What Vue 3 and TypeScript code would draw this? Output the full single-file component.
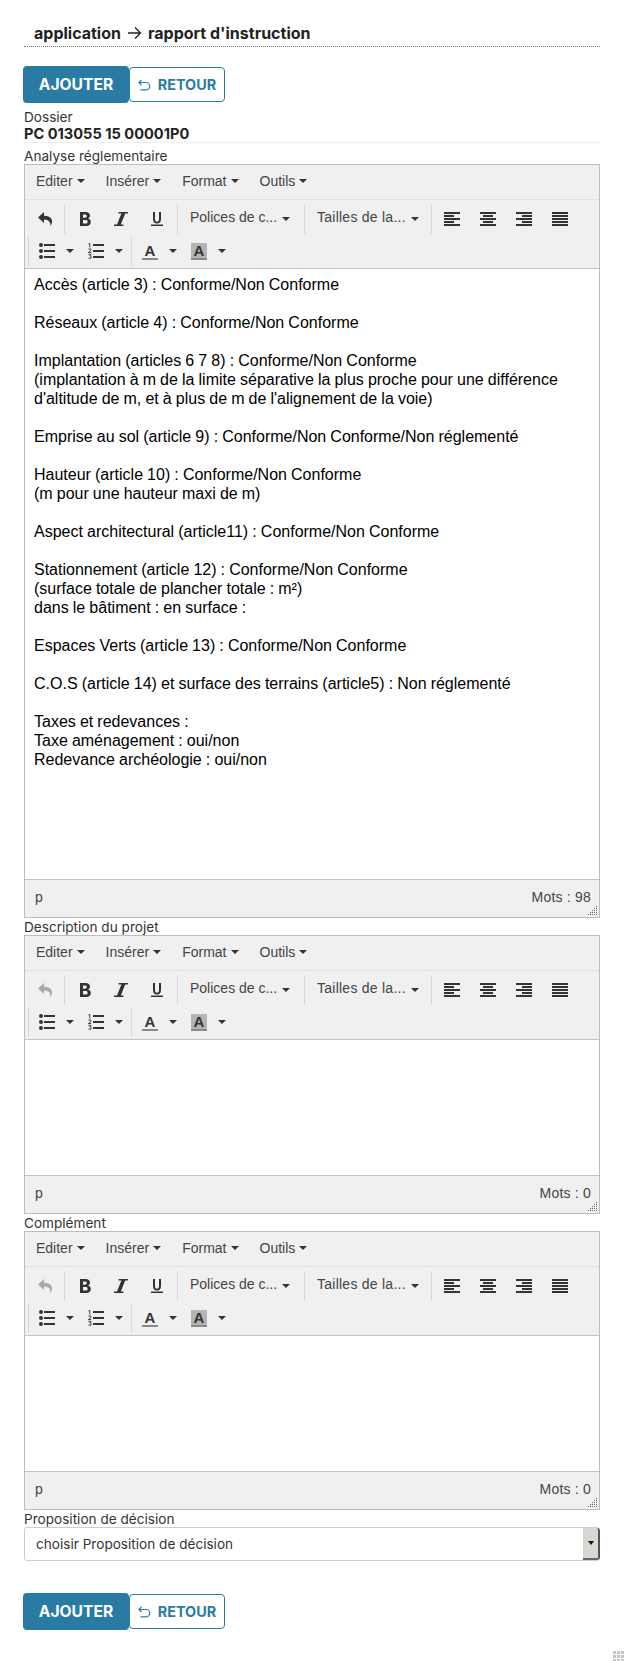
<script setup lang="ts">
const analyse: string[] = [
  'Accès (article 3) : Conforme/Non Conforme',
  '',
  'Réseaux (article 4) : Conforme/Non Conforme',
  '',
  'Implantation (articles 6 7 8) : Conforme/Non Conforme',
  '(implantation à m de la limite séparative la plus proche pour une différence',
  "d'altitude de m, et à plus de m de l'alignement de la voie)",
  '',
  'Emprise au sol (article 9) : Conforme/Non Conforme/Non réglementé',
  '',
  'Hauteur (article 10) : Conforme/Non Conforme',
  '(m pour une hauteur maxi de m)',
  '',
  'Aspect architectural (article11) : Conforme/Non Conforme',
  '',
  'Stationnement (article 12) : Conforme/Non Conforme',
  '(surface totale de plancher totale : m²)',
  'dans le bâtiment : en surface :',
  '',
  'Espaces Verts (article 13) : Conforme/Non Conforme',
  '',
  'C.O.S (article 14) et surface des terrains (article5) : Non réglementé',
  '',
  'Taxes et redevances :',
  'Taxe aménagement : oui/non',
  'Redevance archéologie : oui/non',
]

interface Editor {
  label: string
  lines: string[]
  words: number
  tall: boolean
  undo: boolean
}

const editors: Editor[] = [
  { label: 'Analyse réglementaire', lines: analyse, words: 98, tall: true, undo: true },
  { label: 'Description du projet', lines: [], words: 0, tall: false, undo: false },
  { label: 'Complément', lines: [], words: 0, tall: false, undo: false },
]

const menus: string[] = ['Editer', 'Insérer', 'Format', 'Outils']

const aligns: { name: string; widths: number[] }[] = [
  { name: 'left', widths: [16, 10, 16, 10, 16] },
  { name: 'center', widths: [16, 10, 16, 10, 16] },
  { name: 'right', widths: [16, 10, 16, 10, 16] },
  { name: 'justify', widths: [16, 16, 16, 16, 16] },
]
</script>

<template>
  <div class="page">
    <h1 class="title">
      <span>application</span>
      <svg class="arrow" width="15" height="14" viewBox="0 0 15 14">
        <path d="M1 7h12.5M8 1.5 13.5 7 8 12.5" fill="none" stroke="#222" stroke-width="1.3" />
      </svg>
      <span>rapport d'instruction</span>
    </h1>

    <div class="actions top">
      <button class="btn primary" type="button">AJOUTER</button>
      <button class="btn back" type="button">
        <svg width="13" height="12" viewBox="0 0 13 12">
          <path d="M3.5 1 1 3.500 3.500 6M1.200 3.500h6.800a3.700 3.700 0 0 1 0 7.400H2.500" fill="none" stroke="#2a7ba3" stroke-width="1.200" />
        </svg>
        RETOUR
      </button>
    </div>

    <div class="field-label">Dossier</div>
    <div class="value">PC 013055 15 00001P0</div>

    <section v-for="ed in editors" :key="ed.label" class="editor-field">
      <label class="field-label">{{ ed.label }}</label>
      <div class="editor">
        <div class="menubar">
          <span v-for="m in menus" :key="m" class="menu">{{ m }}<i class="caret"></i></span>
        </div>
        <div class="toolbar">
          <div class="row">
            <div class="group first">
              <span class="tbtn">
                <svg width="16" height="16" viewBox="0 0 16 16">
                  <path
                    :fill="ed.undo ? '#333' : '#aaa'"
                    d="M7 1 1 6.500 7 12V8.400c3 0 5 .9 6 3.400.4 1 .6 2.100.3 3.200 1.600-2 2.200-4.200 1.500-6.300C13.900 6 11 4.800 7 4.700z"
                  />
                </svg>
              </span>
            </div>
            <div class="group">
              <span class="tbtn">
                <svg width="12" height="14" viewBox="0 0 12 14">
                  <path fill="#333" fill-rule="evenodd" d="M1 0h5.600C9.300 0 11 1.300 11 3.500c0 1.500-.8 2.500-2 3 1.700.4 2.800 1.700 2.800 3.500 0 2.500-1.900 4-4.500 4H1zm3 2.400v3.300h2c1.100 0 1.800-.6 1.800-1.700 0-1-.7-1.600-1.800-1.600zm0 5.500v3.700h2.600c1.300 0 2.100-.7 2.100-1.900S7.900 7.900 6.600 7.900z" />
                </svg>
              </span>
              <span class="tbtn">
                <svg width="14" height="14" viewBox="0 0 14 14">
                  <path fill="#333" d="M4.500 0H14v1.600h-2.800L6.800 12.400h2.600V14H0v-1.600h3L7.400 1.600H4.500z" />
                </svg>
              </span>
              <span class="tbtn">
                <svg width="12" height="14" viewBox="0 0 12 14">
                  <path fill="#333" d="M2 0h2v7c0 1.700.7 2.700 2 2.700S8 8.700 8 7V0h2v7c0 3-1.500 4.600-4 4.600S2 10 2 7zM0 12.500h12V14H0z" />
                </svg>
              </span>
            </div>
            <div class="group">
              <span class="listbox"><span class="lb-text">Polices de c...</span><i class="caret"></i></span>
            </div>
            <div class="group">
              <span class="listbox"><span class="lb-text spaced">Tailles de la...</span><i class="caret"></i></span>
            </div>
            <div class="group">
              <span v-for="a in aligns" :key="a.name" class="tbtn">
                <span class="align" :class="a.name">
                  <b v-for="(w, j) in a.widths" :key="j" :style="{ width: w + 'px' }"></b>
                </span>
              </span>
            </div>
          </div>
          <div class="row second">
            <div class="group">
              <span class="split">
                <svg class="ic" width="16" height="16" viewBox="0 0 16 16">
                  <g fill="#333">
                    <circle cx="2" cy="2" r="2" /><circle cx="2" cy="8" r="2" /><circle cx="2" cy="14" r="2" />
                    <rect x="5" y="1" width="11" height="2" /><rect x="5" y="7" width="11" height="2" /><rect x="5" y="13" width="11" height="2" />
                  </g>
                </svg>
                <i class="caret"></i>
              </span>
              <span class="split">
                <svg class="ic" width="16" height="16" viewBox="0 0 16 16">
                  <g fill="#333">
                    <rect x="5" y="1" width="11" height="2" /><rect x="5" y="7" width="11" height="2" /><rect x="5" y="13" width="11" height="2" />
                  </g>
                  <path
                    d="M.5 1 1.800.3V4.500M.4 6h2.600v1.200L.4 9.500H3.200M.4 11.300H3l-1.200 1.500H3v2.400H.4"
                    fill="none"
                    stroke="#333"
                    stroke-width=".9"
                  />
                </svg>
                <i class="caret"></i>
              </span>
            </div>
            <div class="group">
              <span class="split">
                <span class="ic color">A</span>
                <i class="caret"></i>
              </span>
              <span class="split">
                <span class="ic color bg">A</span>
                <i class="caret"></i>
              </span>
            </div>
          </div>
        </div>
        <div class="content" :class="{ tall: ed.tall }">
          <div v-for="(line, i) in ed.lines" :key="i" class="line">{{ line }}</div>
        </div>
        <div class="status">
          <span>p</span>
          <span class="words">Mots : {{ ed.words }}</span>
          <svg class="resize" width="10" height="10" viewBox="0 0 10 10">
            <g fill="#666">
              <rect x="8" y="0" width="1" height="1" />
              <rect x="6" y="2" width="1" height="1" /><rect x="8" y="2" width="1" height="1" />
              <rect x="4" y="4" width="1" height="1" /><rect x="6" y="4" width="1" height="1" /><rect x="8" y="4" width="1" height="1" />
              <rect x="2" y="6" width="1" height="1" /><rect x="4" y="6" width="1" height="1" /><rect x="6" y="6" width="1" height="1" /><rect x="8" y="6" width="1" height="1" />
              <rect x="0" y="8" width="1" height="1" /><rect x="2" y="8" width="1" height="1" /><rect x="4" y="8" width="1" height="1" /><rect x="6" y="8" width="1" height="1" /><rect x="8" y="8" width="1" height="1" />
            </g>
          </svg>
        </div>
      </div>
    </section>

    <label class="field-label select-label">Proposition de décision</label>
    <div class="select-wrap">
      <select class="select">
        <option>choisir Proposition de décision</option>
      </select>
      <span class="select-btn"><i></i></span>
    </div>

    <div class="actions bottom">
      <button class="btn primary" type="button">AJOUTER</button>
      <button class="btn back" type="button">
        <svg width="13" height="12" viewBox="0 0 13 12">
          <path d="M3.500 1 1 3.500 3.500 6M1.200 3.500h6.800a3.700 3.700 0 0 1 0 7.400H2.500" fill="none" stroke="#2a7ba3" stroke-width="1.200" />
        </svg>
        RETOUR
      </button>
    </div>

    <svg class="grip" width="11" height="10" viewBox="0 0 11 10">
      <g fill="#c4c4c4">
        <rect x="0" y="0" width="3" height="3" /><rect x="4" y="0" width="3" height="3" /><rect x="8" y="0" width="3" height="3" />
        <rect x="0" y="4" width="3" height="3" /><rect x="4" y="4" width="3" height="3" /><rect x="8" y="4" width="3" height="3" />
        <rect x="0" y="8" width="3" height="2" /><rect x="4" y="8" width="3" height="2" /><rect x="8" y="8" width="3" height="2" />
      </g>
    </svg>
  </div>
</template>

<style scoped>
.page {
  position: relative;
  box-sizing: border-box;
  width: 624px;
  height: 1661px;
  padding: 0 24px;
  overflow: hidden;
  background: #fff;
  color: #333;
  font-family: Inter, "Liberation Sans", sans-serif;
  font-size: 13.6px;
}
.title {
  display: flex;
  align-items: center;
  gap: 6px;
  box-sizing: border-box;
  height: 47px;
  margin: 0;
  padding: 23px 0 3px 10px;
  border-bottom: 1px dotted #777;
  font-size: 16px;
  line-height: 20px;
  font-weight: 650;
  color: #222;
}
.actions {
  display: flex;
  align-items: center;
  margin-left: -1px;
}
.actions.top { margin-top: 19px; }
.actions.bottom { margin-top: 32px; }
.btn {
  box-sizing: border-box;
  font-family: Inter, "Liberation Sans", sans-serif;
  font-weight: 700;
  cursor: pointer;
}
.primary {
  width: 106px;
  height: 37px;
  border: 0;
  padding: 0;
  border-radius: 4px;
  background: #2a7ba3;
  color: #fff;
  font-size: 15.6px;
}
.back {
  display: flex;
  align-items: center;
  justify-content: center;
  gap: 7px;
  width: 96px;
  height: 35px;
  padding: 0;
  border: 1px solid #2a7ba3;
  border-radius: 4px;
  background: #fff;
  color: #2a7ba3;
  font-size: 14.4px;
}
.field-label {
  display: block;
  height: 16px;
  line-height: 16px;
  font-size: 13.6px;
  font-weight: 400;
  color: #333;
}
.actions.top + .field-label { margin-top: 6px; }
.value {
  height: 17px;
  line-height: 18px;
  font-weight: 700;
  font-size: 14.6px;
  color: #222;
  border-bottom: 1px solid #eee;
}
.editor-field { margin-top: 1px; }
.value + .editor-field { margin-top: 5px; }
.editor {
  width: 576px;
  box-sizing: border-box;
  border: 1px solid #bdbdbd;
  background: #f0f0f0;
  font-family: "Liberation Sans", Arial, sans-serif;
  color: #333;
}
.menubar {
  display: flex;
  gap: 21px;
  height: 34px;
  align-items: center;
  box-sizing: content-box;
  padding-left: 11px;
  border-bottom: 1px solid #e0e0e0;
}
.menu {
  display: inline-flex;
  align-items: center;
  padding-bottom: 2px;
  font-size: 14px;
  color: #444;
}
.caret {
  display: inline-block;
  width: 0;
  height: 0;
  margin-left: 4px;
  border-left: 4px solid transparent;
  border-right: 4px solid transparent;
  border-top: 4px solid #333;
}
.toolbar {
  height: 69px;
  box-sizing: border-box;
  border-bottom: 1px solid #c4c4c4;
}
.row {
  display: flex;
  height: 30px;
  padding-top: 4px;
  padding-left: 2px;
}
.row.second {
  padding-top: 2px;
  padding-left: 2px;
}
.group {
  display: flex;
  align-items: center;
  height: 30px;
  margin-left: 1px;
  margin-right: 1px;
  padding-left: 2px;
  border-left: 1px solid #d9d9d9;
}
.group.first {
  margin: 0;
  padding-left: 0;
  border-left: 0;
}
.tbtn {
  display: flex;
  align-items: center;
  justify-content: center;
  width: 36px;
  height: 30px;
}
.listbox {
  display: flex;
  align-items: center;
  box-sizing: border-box;
  width: 122px;
  height: 30px;
  padding: 0 0 4px 10px;
  font-size: 14px;
  color: #444;
  white-space: nowrap;
}
.listbox .caret { margin-top: 4px; margin-left: 5px; }
.spaced { letter-spacing: .25px; }
.align {
  display: flex;
  flex-direction: column;
  gap: 1px;
  width: 16px;
}
.align b {
  display: block;
  height: 2px;
  background: #333;
}
.align.center { align-items: center; }
.align.right { align-items: flex-end; }
.split {
  display: flex;
  align-items: center;
  width: 49px;
  height: 30px;
}
.split .ic {
  flex: none;
  margin-left: 8px;
  width: 16px;
}
.split .caret { margin-left: 11px; }
.color {
  display: block;
  box-sizing: border-box;
  height: 17px;
  line-height: 15px;
  text-align: center;
  font-weight: 700;
  font-size: 15px;
  color: #333;
  border-bottom: 2px solid #888;
}
.color.bg { background: #b4b4b4; }
.content {
  height: 136px;
  box-sizing: border-box;
  padding: 6px 9px;
  background: #fff;
  border-bottom: 1px solid #c4c4c4;
  font-size: 16px;
  word-spacing: -.35px;
  line-height: 19px;
  color: #000;
}
.content.tall { height: 611px; }
.line { min-height: 19px; }
.status {
  position: relative;
  display: flex;
  justify-content: space-between;
  align-items: center;
  box-sizing: border-box;
  height: 37px;
  padding: 0 8px 3px 10px;
  font-size: 14px;
  color: #444;
}
.words { letter-spacing: .2px; }
.resize {
  position: absolute;
  right: 1px;
  bottom: 1px;
}
.select-label { margin-top: 1px; }
.select-wrap {
  position: relative;
  width: 576px;
  height: 34px;
}
.select {
  appearance: none;
  display: block;
  width: 100%;
  height: 100%;
  box-sizing: border-box;
  padding: 0 0 0 11px;
  border: 1px solid #ccc;
  border-radius: 3px;
  background: #fff;
  color: #333;
  font-family: Inter, "Liberation Sans", sans-serif;
  font-size: 13.6px;
}
.select-btn {
  position: absolute;
  top: 1px;
  right: 0;
  bottom: 1px;
  display: flex;
  align-items: center;
  justify-content: center;
  box-sizing: border-box;
  width: 17px;
  background: #d9d7d1;
  border-right: 2px solid #555;
  border-bottom: 2px solid #666;
  border-radius: 0 3px 3px 0;
}
.select-btn i {
  width: 0;
  height: 0;
  border-left: 3.5px solid transparent;
  border-right: 3.5px solid transparent;
  border-top: 4px solid #111;
}
.grip {
  position: absolute;
  right: 0;
  bottom: 0;
}
</style>
